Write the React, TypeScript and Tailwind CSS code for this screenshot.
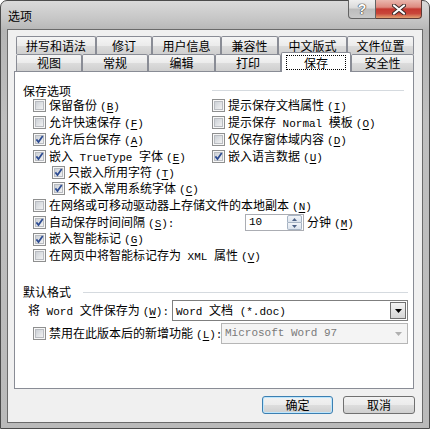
import type { ReactNode } from "react";

// Word 2003 "选项" dialog, 保存 tab, Windows 7 look

const Latin = ({ children }: { children: ReactNode }) => (
  <span className="whitespace-pre font-['Liberation_Mono',monospace] text-[11px]">{children}</span>
);

const Key = ({ k, colon }: { k: string; colon?: boolean }) => (
  <span className="ml-[3px] font-['Liberation_Mono',monospace] text-[11px]">
    (<span className="underline underline-offset-2">{k}</span>){colon ? ":" : ""}
  </span>
);

const CheckBox = ({ on }: { on?: boolean }) => (
  <svg width="13" height="13" viewBox="0 0 13 13" className="shrink-0">
    <defs>
      <linearGradient id="cbg" x1="0" y1="0" x2="1" y2="1">
        <stop offset="0" stopColor="#c9ced4" />
        <stop offset="1" stopColor="#f4f4f4" />
      </linearGradient>
    </defs>
    <rect x="0.5" y="0.5" width="12" height="12" fill="#f7f7f7" stroke="#8e8f8f" />
    <rect x="2.5" y="2.5" width="8" height="8" fill="url(#cbg)" stroke="#b9bcc1" />
    {on && (
      <path d="M3.4 6.4 L5.5 9 L9.7 3" fill="none" stroke="#2c4b92" strokeWidth="1.7" />
    )}
  </svg>
);

const Row = ({ on, h, children }: { on?: boolean; h: string; children: ReactNode }) => (
  <div className={`flex items-center gap-[3px] ${h}`}>
    <CheckBox on={on} />
    <span className="whitespace-nowrap leading-[14px]">{children}</span>
  </div>
);

const row1 = [
  { t: "拼写和语法", w: "w-[80px]" },
  { t: "修订", w: "w-[56px]" },
  { t: "用户信息", w: "w-[69px]" },
  { t: "兼容性", w: "w-[57px]" },
  { t: "中文版式", w: "w-[69px]" },
  { t: "文件位置", w: "w-[67px]" },
];

const row2 = [
  { t: "视图", w: "w-[66px]" },
  { t: "常规", w: "w-[66px]" },
  { t: "编辑", w: "w-[67px]" },
  { t: "打印", w: "w-[66px]" },
  { t: "保存", w: "w-[70px]", active: true },
  { t: "安全性", w: "w-[63px]" },
];

const Tab = ({ t, w }: { t: string; w: string }) => (
  <div
    className={`${w} flex items-center justify-center rounded-t-[2px] border border-b-0 border-[#898c95] bg-[linear-gradient(180deg,#f5f5f5_0%,#ebebeb_50%,#dcdcdc_51%,#cfcfcf_100%)] leading-[14px]`}
  >
    {t}
  </div>
);

const DownArrow = ({ color }: { color: string }) => (
  <svg width="7" height="4" viewBox="0 0 7 4">
    <path d="M0 0 H7 L3.5 4 Z" fill={color} />
  </svg>
);

export default function App() {
  return (
    <div className="w-[430px] h-[429px] bg-white font-['Noto_Sans_CJK_SC','Noto_Sans',sans-serif] text-[12px] text-black">
      <div className="flex h-full flex-col rounded-t-[7px] border border-[#4b4b4b] bg-[linear-gradient(180deg,#dadada_0%,#c6c6c6_18px,#b5b5b5_30px,#bfbfbf_120px,#bababa_100%)]">
        {/* title bar */}
        <div className="flex h-[28px] justify-between">
          <span className="ml-[7px] mt-[8px] leading-[14px]">选项</span>
          <div className="mr-[7px] flex h-[19px] -mt-px">
            <div className="flex w-[28px] items-center justify-center rounded-bl-[4px] border border-t-0 border-[#636363] bg-[linear-gradient(180deg,#efefef_0%,#dadada_45%,#bcbcbc_50%,#c9c9c9_100%)]">
              <span className="font-['Liberation_Sans',sans-serif] text-[14px] font-bold leading-none text-white [text-shadow:0_0_1px_#333,0_0_1px_#333,0_0_1px_#333]">
                ?
              </span>
            </div>
            <div className="flex w-[46px] items-center justify-center rounded-br-[4px] border border-l-0 border-t-0 border-[#5e3a36] bg-[linear-gradient(180deg,#eab7ae_0%,#dd8a7f_40%,#c4372f_50%,#c9463a_75%,#e2a071_100%)]">
              <svg width="14" height="11" viewBox="0 0 14 11">
                <path d="M2 1.5 L12 9.5 M12 1.5 L2 9.5" stroke="#3a2a28" strokeWidth="4" strokeLinecap="round" />
                <path d="M2 1.5 L12 9.5 M12 1.5 L2 9.5" stroke="#ffffff" strokeWidth="2.2" strokeLinecap="round" />
              </svg>
            </div>
          </div>
        </div>

        {/* client area */}
        <div className="mx-[6px] mb-[5px] flex flex-1 flex-col border border-[#6a6a6a] bg-[#f0f0f0] pl-[6px] pr-[8px] pt-[6px]">
          <div className="ml-[2px] flex h-[18px]">
            {row1.map((r) => (
              <Tab key={r.t} t={r.t} w={r.w} />
            ))}
          </div>
          <div className="ml-[2px] flex h-[17px] items-end">
            {row2.map((r) =>
              r.active ? (
                <div
                  key={r.t}
                  className={`${r.w} relative z-10 -mb-px flex h-[20px] rounded-t-[2px] border border-b-0 border-[#898c95] bg-white px-[4px] pb-[2px] pt-[2px]`}
                >
                  <div className="flex flex-1 items-center justify-center border border-dotted border-black leading-[14px]">
                    {r.t}
                  </div>
                </div>
              ) : (
                <div key={r.t} className="flex h-full">
                  <Tab t={r.t} w={r.w} />
                </div>
              )
            )}
          </div>

          {/* tab panel */}
          <div className="flex h-[318px] w-[400px] flex-col border border-[#898c95] bg-white pt-[12px]">
            <div className="flex h-[13px] items-center pl-[8px]">
              <span className="leading-[14px]">保存选项</span>
              <div className="ml-[141px] mr-[9px] h-px flex-1 bg-[#d5dadf]" />
            </div>

            <div className="pl-[18px]">
              <div className="grid grid-cols-[179px_1fr]">
                <Row h="h-[17px]">
                  保留备份<Key k="B" />
                </Row>
                <Row h="h-[17px]">
                  提示保存文档属性<Key k="I" />
                </Row>
                <Row h="h-[17px]">
                  允许快速保存<Key k="F" />
                </Row>
                <Row h="h-[17px]">
                  提示保存<Latin>{" Normal "}</Latin>模板<Key k="O" />
                </Row>
                <Row on h="h-[17px]">
                  允许后台保存<Key k="A" />
                </Row>
                <Row h="h-[17px]">
                  仅保存窗体域内容<Key k="D" />
                </Row>
                <Row on h="h-[17px]">
                  嵌入<Latin>{" TrueType "}</Latin>字体<Key k="E" />
                </Row>
                <Row on h="h-[17px]">
                  嵌入语言数据<Key k="U" />
                </Row>
              </div>
              <div className="pl-[19px]">
                <Row on h="h-[15px]">
                  只嵌入所用字符<Key k="T" />
                </Row>
                <Row on h="h-[17px]">
                  不嵌入常用系统字体<Key k="C" />
                </Row>
              </div>
              <Row h="h-[17px]">
                在网络或可移动驱动器上存储文件的本地副本<Key k="N" />
              </Row>
              <div className="flex h-[17px] items-center">
                <div className="w-[212px]">
                  <Row on h="h-[17px]">
                    自动保存时间间隔<Key k="S" colon />
                  </Row>
                </div>
                <div className="flex h-[17px] w-[59px] items-center border border-[#abadb3] bg-white">
                  <span className="flex-1 pl-[3px] font-['Liberation_Mono',monospace] text-[11px] leading-none">10</span>
                  <div className="mr-px flex h-[15px] w-[15px] flex-col">
                    <div className="flex flex-1 items-center justify-center rounded-t-[2px] border border-[#a7b4c4] bg-[linear-gradient(180deg,#f2f5f9,#dce4ee)]">
                      <svg width="5" height="3" viewBox="0 0 5 3">
                        <path d="M0 3 H5 L2.5 0 Z" fill="#4d6185" />
                      </svg>
                    </div>
                    <div className="flex flex-1 items-center justify-center rounded-b-[2px] border border-t-0 border-[#a7b4c4] bg-[linear-gradient(180deg,#f2f5f9,#dce4ee)]">
                      <svg width="5" height="3" viewBox="0 0 5 3">
                        <path d="M0 0 H5 L2.5 3 Z" fill="#4d6185" />
                      </svg>
                    </div>
                  </div>
                </div>
                <span className="ml-[3px] leading-[14px]">
                  分钟<Key k="M" />
                </span>
              </div>
              <Row on h="h-[16px]">
                嵌入智能标记<Key k="G" />
              </Row>
              <Row h="h-[17px]">
                在网页中将智能标记存为<Latin>{" XML "}</Latin>属性<Key k="V" />
              </Row>
            </div>

            <div className="mt-[21px] flex h-[14px] items-center pl-[8px]">
              <span className="leading-[14px]">默认格式</span>
              <div className="ml-[12px] mr-[5px] h-px flex-1 bg-[#d5dadf]" />
            </div>

            <div className="mt-px flex h-[21px] items-center pl-[13px]">
              <span className="w-[144px] whitespace-nowrap leading-[14px]">
                将<Latin>{" Word "}</Latin>文件保存为<Key k="W" colon />
              </span>
              <div className="flex h-[21px] w-[236px] items-center border border-[#7f7f7f] bg-white pr-px">
                <span className="flex-1 pl-[3px] leading-[14px]">
                  <Latin>{"Word "}</Latin>文档<Latin>{" (*.doc)"}</Latin>
                </span>
                <div className="flex h-[17px] w-[16px] items-center justify-center border border-[#707070] bg-[linear-gradient(180deg,#f4f4f4,#d6d6d6)]">
                  <DownArrow color="#000" />
                </div>
              </div>
            </div>

            <div className="mt-[2px] flex h-[21px] items-center pl-[18px]">
              <div className="w-[188px]">
                <Row h="h-[21px]">
                  禁用在此版本后的新增功能<Key k="L" colon />
                </Row>
              </div>
              <div className="flex h-[21px] w-[187px] items-center border border-[#b6b6b6] bg-[#f4f4f4] pr-px">
                <span className="flex-1 pl-[3px] font-['Liberation_Mono',monospace] text-[11px] text-[#7a7a7a]">
                  Microsoft Word 97
                </span>
                <div className="flex h-[17px] w-[16px] items-center justify-center">
                  <DownArrow color="#b0b0b0" />
                </div>
              </div>
            </div>
          </div>

          {/* buttons */}
          <div className="mt-[7px] flex justify-end gap-[10px]">
            <button className="h-[18px] w-[71px] rounded-[3px] border border-[#3c7fb1] bg-[linear-gradient(180deg,#f2f2f2_0%,#ebebeb_50%,#dddddd_51%,#cfcfcf_100%)] leading-[14px] shadow-[inset_0_0_0_1px_#bde6fd]">
              确定
            </button>
            <button className="-mr-px h-[18px] w-[72px] rounded-[3px] border border-[#707070] bg-[linear-gradient(180deg,#f2f2f2_0%,#ebebeb_50%,#dddddd_51%,#cfcfcf_100%)] leading-[14px]">
              取消
            </button>
          </div>
        </div>
      </div>
    </div>
  );
}
